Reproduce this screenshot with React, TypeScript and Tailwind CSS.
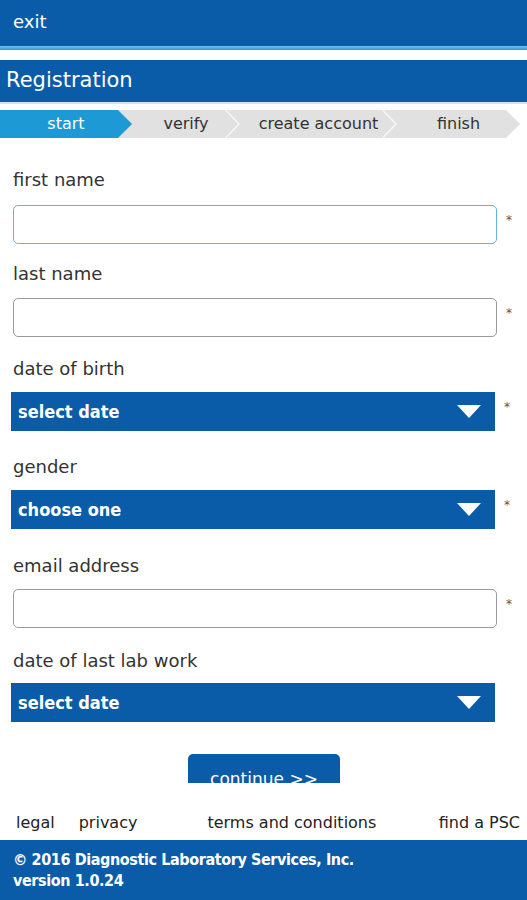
import React from 'react';

const font = "font-['DejaVu_Sans',sans-serif]";
const boldFont = "font-['DejaVu_Sans_Condensed','Liberation_Sans_Narrow','DejaVu_Sans',sans-serif]";

type Field = {
  label: string;
  kind: 'input' | 'select';
  value?: string;
  required: boolean;
  focused?: boolean;
  top: string;
  gap: string;
};

const fields: Field[] = [
  { label: 'first name', kind: 'input', required: true, focused: true, top: 'mt-[31px]', gap: 'mt-[14px]' },
  { label: 'last name', kind: 'input', required: true, top: 'mt-[19px]', gap: 'mt-[13px]' },
  { label: 'date of birth', kind: 'select', value: 'select date', required: true, top: 'mt-[21px]', gap: 'mt-[12px]' },
  { label: 'gender', kind: 'select', value: 'choose one', required: true, top: 'mt-[25px]', gap: 'mt-[12px]' },
  { label: 'email address', kind: 'input', required: true, top: 'mt-[26px]', gap: 'mt-[12px]' },
  { label: 'date of last lab work', kind: 'select', value: 'select date', required: false, top: 'mt-[22px]', gap: 'mt-[11px]' },
];

const steps = [
  { label: 'start', w: 'w-[132px]' },
  { label: 'verify', w: 'w-[108px]' },
  { label: 'create account', w: 'w-[157px]' },
  { label: 'finish', w: 'w-[123px]' },
];

function Chevron() {
  return (
    <svg className="absolute right-0 top-0" width="15" height="28" viewBox="0 0 15 28">
      <polyline points="0.5,0 14,14 0.5,28" fill="none" stroke="#f7f7f7" strokeWidth="1.5" />
    </svg>
  );
}

function StepBar() {
  return (
    <div className="mt-[6px] flex h-[28px] w-[520px] bg-[#e1e1e1] [clip-path:polygon(0_0,506px_0,520px_50%,506px_100%,0_100%)]">
      {steps.map((s, i) => (
        <div key={s.label} className={`relative flex h-full shrink-0 items-center justify-center ${s.w}`}>
          {i === 0 && (
            <div className="absolute inset-0 bg-[#1d9ad6] [clip-path:polygon(0_0,118px_0,132px_50%,118px_100%,0_100%)]" />
          )}
          {i > 0 && i < steps.length - 1 && <Chevron />}
          <span className={`relative text-[16px] leading-none ${i === 0 ? 'text-white' : 'text-[#333]'}`}>{s.label}</span>
        </div>
      ))}
    </div>
  );
}

export default function App() {
  return (
    <div className={`flex h-[900px] w-[527px] flex-col overflow-hidden bg-white ${font}`}>
      {/* top bar */}
      <div className="flex h-[46px] shrink-0 items-center bg-[#0b5ca8] pb-[4px] pl-[13px] text-[18px] text-white">exit</div>
      <div className="h-[4px] shrink-0 bg-gradient-to-b from-[#6cc0ec] to-[#2f9ad6]" />

      {/* title */}
      <div className="mt-[10px] flex h-[44px] shrink-0 items-center border-b-2 border-[#cfe4f3] bg-[#0b5ca8] pl-[6px] text-[21px] font-medium text-white">
        Registration
      </div>

      <StepBar />

      {/* form */}
      <div className="flex min-h-0 flex-1 flex-col overflow-hidden">
        {fields.map((f) => (
          <div key={f.label} className={f.top}>
            <div className="pl-[13px] text-[18px] leading-[22px] text-[#333]">{f.label}</div>
            <div className={`flex items-center ${f.gap}`}>
              {f.kind === 'input' ? (
                <div
                  className={`ml-[13px] h-[39px] w-[484px] rounded-[5px] bg-white ${
                    f.focused ? 'border-[1.5px] border-[#62b3ea]' : 'border border-[#9b9b9b]'
                  }`}
                />
              ) : (
                <div className="ml-[11px] flex h-[39px] w-[484px] items-center justify-between bg-[#0b5ca8] pl-[7px] pr-[14px]">
                  <span className={`text-[18px] font-bold text-white ${boldFont}`}>{f.value}</span>
                  <svg width="24" height="14" viewBox="0 0 24 14">
                    <polygon points="0,0 24,0 12,13" fill="#fff" />
                  </svg>
                </div>
              )}
              {f.required && <span className="relative -top-[5px] ml-[9px] text-[12px] text-[#555]">*</span>}
            </div>
          </div>
        ))}

        <div className="mt-[32px] flex justify-center pl-[1px]">
          <div className="flex h-[40px] w-[152px] items-end justify-center rounded-t-[5px] bg-[#0b5ca8] pb-[2px] text-[17px] text-white">
            continue &gt;&gt;
          </div>
        </div>
      </div>

      {/* links */}
      <div className="flex h-[57px] shrink-0 items-center pl-[16px] pt-[22px] text-[16px] text-[#222]">
        <span>legal</span>
        <span className="ml-[24px]">privacy</span>
        <span className="ml-[70px]">terms and conditions</span>
        <span className="ml-auto mr-[7px]">find a PSC</span>
      </div>

      {/* footer */}
      <div className={`flex h-[60px] shrink-0 flex-col justify-center bg-[#0b5ca8] pl-[13px] text-[16px] font-bold leading-[21px] tracking-[-0.4px] text-white ${boldFont}`}>
        <div>© 2016 Diagnostic Laboratory Services, Inc.</div>
        <div>version 1.0.24</div>
      </div>
    </div>
  );
}
